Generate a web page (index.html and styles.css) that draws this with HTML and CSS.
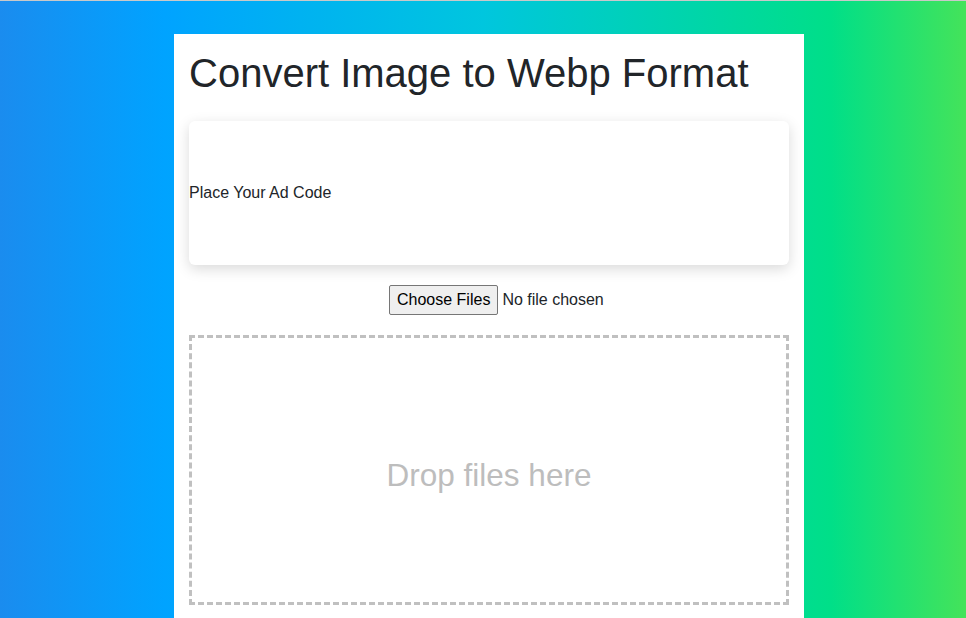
FILE: index.html
```html
<!DOCTYPE html>
<html lang="en">
<head>
<meta charset="utf-8">
<title>Convert Image to Webp Format</title>
<link rel="stylesheet" href="styles.css">
</head>
<body>
<div class="topline"></div>
<div class="page">
  <main class="container">
    <h1 class="title">Convert Image to Webp Format</h1>
    <div class="ad-box">Place Your Ad Code</div>
    <div class="file-row">
      <input type="file" class="file-input" multiple>
    </div>
    <div class="drop-zone">Drop files here</div>
  </main>
</div>
</body>
</html>
```
FILE: styles.css
```css
html, body {
  margin: 0;
  padding: 0;
  height: 100%;
}
body {
  font-family: "Liberation Sans", Arial, sans-serif;
  color: #212529;
  background: linear-gradient(90deg, #1a8cef 0%, #00a3ff 17%, #00c6de 50%, #00df88 86%, #44e35a 100%);
  overflow: hidden;
}
.topline {
  height: 1px;
  background: #c9c9c9;
}
.page {
  padding-left: 12px;
}
.container {
  width: 600px;
  margin: 33px auto 0;
  padding: 15px 15px 40px;
  background: #fff;
  min-height: 600px;
}
.title {
  margin: 0 0 24px;
  font-size: 40px;
  line-height: 48px;
  font-weight: 400;
  color: #212529;
}
.ad-box {
  height: 144px;
  display: flex;
  align-items: center;
  border-radius: 6px;
  box-shadow: 0 4px 14px rgba(0, 0, 0, 0.15);
  font-size: 16px;
  background: #fff;
}
.file-row {
  display: flex;
  justify-content: center;
  margin: 20px 0;
}
.file-input {
  width: 230px;
  margin-left: 30px;
  font-family: "Liberation Sans", Arial, sans-serif;
  font-size: 16px;
  color: #212529;
}
.file-input::file-selector-button {
  font-family: "Liberation Sans", Arial, sans-serif;
  font-size: 16px;
  color: #000;
  background: #efefef;
  border: 1px solid #767676;
  border-radius: 2px;
  padding: 5px 7px;
  margin-right: 4px;
}
.drop-zone {
  height: 254px;
  padding-top: 10px;
  border: 3px dashed #c0c0c0;
  display: flex;
  align-items: center;
  justify-content: center;
  font-size: 31.5px;
  color: #bdbdbd;
}
```
